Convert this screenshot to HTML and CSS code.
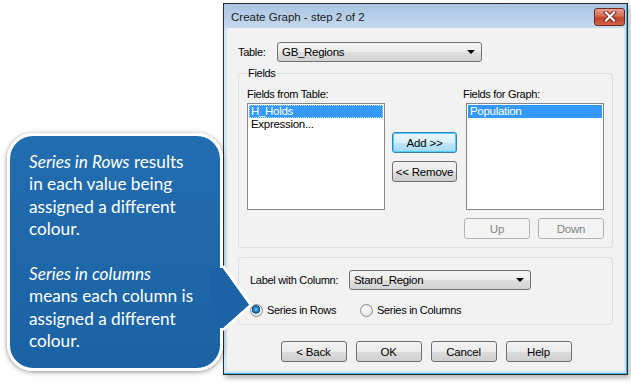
FILE: index.html
```html
<!DOCTYPE html>
<html lang="en">
<head>
    <meta charset="UTF-8">
    <title>Create Graph - step 2 of 2</title>
    <link rel="stylesheet" href="styles.css">
</head>
<body>

    <div class="stage">

        <!-- Callout bubble -->
        <div class="callout">
            <p><em>Series in Rows</em> results<br>in each value being<br>assigned a different<br>colour.</p>
            <p><em>Series in columns</em><br>means each column is<br>assigned a different<br>colour.</p>
            <svg class="callout-pointer" width="46" height="80" viewBox="0 0 46 80">
                <polygon points="0,10 13,10 41,47 13,70 0,70" fill="#1b63a6"/>
                <polyline points="13,8 41,47 13,72" fill="none" stroke="#ffffff" stroke-width="3" stroke-linejoin="miter"/>
            </svg>
        </div>

        <!-- Dialog window -->
        <div class="window">
            <div class="titlebar">
                <span class="title">Create Graph - step 2 of 2</span>
                <span class="close-btn">
                    <svg width="14" height="11" viewBox="0 0 14 11">
                        <path d="M3 1.5 L11 9.5 M11 1.5 L3 9.5" stroke="#6e2418" stroke-width="4" stroke-linecap="square"/>
                        <path d="M3 1.5 L11 9.5 M11 1.5 L3 9.5" stroke="#ffffff" stroke-width="2.2" stroke-linecap="square"/>
                    </svg>
                </span>
            </div>

            <div class="dialog">
                <div class="table-row">
                    <span class="row-label">Table:</span>
                    <div class="combo table-combo"><span>GB_Regions</span><i class="arrow"></i></div>
                </div>

                <fieldset class="group fields">
                    <legend>Fields</legend>
                    <div class="fields-body">
                        <div class="col">
                            <div class="caption">Fields from Table:</div>
                            <div class="listbox">
                                <div class="item selected focus">H_Holds</div>
                                <div class="item">Expression...</div>
                            </div>
                        </div>
                        <div class="mid">
                            <button class="btn default">Add &gt;&gt;</button>
                            <button class="btn">&lt;&lt; Remove</button>
                        </div>
                        <div class="col col-right">
                            <div class="caption">Fields for Graph:</div>
                            <div class="listbox">
                                <div class="item selected">Population</div>
                            </div>
                            <div class="order-row">
                                <button class="btn" disabled>Up</button>
                                <button class="btn" disabled>Down</button>
                            </div>
                        </div>
                    </div>
                </fieldset>

                <div class="group options">
                    <div class="label-row">
                        <span class="row-label label-col">Label with Column:</span>
                        <div class="combo label-combo"><span>Stand_Region</span><i class="arrow"></i></div>
                    </div>
                    <div class="radio-row">
                        <span class="radio-opt first"><i class="radio checked"></i>Series in Rows</span>
                        <span class="radio-opt"><i class="radio"></i>Series in Columns</span>
                    </div>
                </div>

                <div class="actions">
                    <button class="btn">&lt; Back</button>
                    <button class="btn">OK</button>
                    <button class="btn">Cancel</button>
                    <button class="btn">Help</button>
                </div>
            </div>
        </div>

    </div>

</body>
</html>
```

FILE: styles.css
```css
/* Page */
body {
    margin: 0;
    background: #ffffff;
    width: 631px;
    height: 383px;
    overflow: hidden;
}

.stage {
    display: flex;
    align-items: flex-start;
    padding: 3px 0 0 7px;
}

/* Callout bubble */
.callout {
    position: relative;
    z-index: 2;
    box-sizing: border-box;
    width: 216px;
    height: 238px;
    margin-top: 130px;
    padding: 15px 4px 0 19px;
    border: 3px solid #ffffff;
    border-radius: 26px;
    background: linear-gradient(to bottom, #226db0, #1a62a4);
    box-shadow: 0 1px 5px rgba(0, 0, 0, 0.45);
    font-family: Lato, "Open Sans", sans-serif;
    font-size: 17.2px;
    line-height: 22.4px;
    color: #ffffff;
    white-space: nowrap;
}

.callout p {
    margin: 0 0 22.4px 0;
}

.callout-pointer {
    position: absolute;
    left: 200px;
    top: 122px;
}

/* Window frame */
.window {
    box-sizing: border-box;
    width: 405px;
    height: 372px;
    border: 1px solid #2e2e2e;
    padding: 0 3px 3px;
    display: flex;
    flex-direction: column;
    background: linear-gradient(to bottom, #a9c4e2 0, #c6daf0 24px, #d6e5f5 25px, #d6e5f5 100%);
    box-shadow: inset -1px -1px 0 #39b6e8, 2px 3px 5px rgba(0, 0, 0, 0.3);
    font-family: "Liberation Sans", Arial, sans-serif;
    font-size: 11px;
    letter-spacing: -0.3px;
    color: #000;
}

.titlebar {
    height: 24px;
    display: flex;
    align-items: center;
    justify-content: space-between;
    padding: 0 0 0 4px;
}

.title {
    font-size: 11.5px;
    letter-spacing: 0;
    color: #1b1b1b;
    margin-top: 1px;
}

.close-btn {
    box-sizing: border-box;
    width: 31px;
    height: 18px;
    margin-right: -1px;
    margin-top: 1px;
    border: 1px solid #6c2a1f;
    border-radius: 3px;
    background: linear-gradient(to bottom, #e8a08e 0%, #d46a53 45%, #c2432b 55%, #d3624a 100%);
    display: flex;
    align-items: center;
    justify-content: center;
}

/* Dialog body */
.dialog {
    flex: 1;
    background: #f2f2f2;
    padding: 14px 11px 0 11px;
    display: flex;
    flex-direction: column;
}

.table-row,
.label-row {
    display: flex;
    align-items: center;
}

.row-label {
    width: 39px;
}

.label-col {
    width: 99px;
}

/* Combo box */
.combo {
    box-sizing: border-box;
    height: 20px;
    border: 1px solid #707070;
    border-radius: 3px;
    background: linear-gradient(to bottom, #f6f6f6 0%, #ececec 50%, #dfdfdf 51%, #d3d3d3 100%);
    display: flex;
    align-items: center;
    justify-content: space-between;
    padding: 0 6px 0 4px;
    font-size: 11.5px;
}

.table-combo {
    width: 205px;
}

.label-combo {
    width: 182px;
}

.arrow {
    width: 0;
    height: 0;
    border-left: 4px solid transparent;
    border-right: 4px solid transparent;
    border-top: 4px solid #000;
}

/* Group boxes */
.group {
    border: 1px solid #d5dfe5;
    border-radius: 3px;
    margin: 0;
}

.fields {
    margin-top: 4px;
    padding: 7px 8px 8px 8px;
    min-width: 0;
}

.fields legend {
    padding: 0 1px;
    line-height: 14px;
}

.fields-body {
    display: flex;
}

.caption {
    height: 14px;
    line-height: 14px;
    margin-bottom: 2px;
}

.col {
    width: 138px;
}

.col-right {
    width: 140px;
    margin-left: 7px;
}

.col-right .caption {
    margin-left: -1px;
}

.col-right .listbox {
    margin-left: 2px;
}

.listbox {
    box-sizing: border-box;
    width: 138px;
    height: 107px;
    border: 1px solid #828790;
    background: #ffffff;
    padding: 1px;
}

.item {
    height: 13px;
    line-height: 13px;
    padding-left: 2px;
    font-size: 11.5px;
}

.item.selected {
    background: #3399ff;
    color: #ffffff;
}

.item.focus {
    outline: 1px dotted #b8dcff;
    outline-offset: -1px;
}

.mid {
    width: 65px;
    margin-left: 7px;
    padding-top: 45px;
    display: flex;
    flex-direction: column;
    gap: 8px;
}

.mid .btn {
    width: 65px;
}

.order-row {
    display: flex;
    gap: 8px;
    margin-top: 8px;
}

/* Buttons */
.btn {
    box-sizing: border-box;
    width: 66px;
    height: 21px;
    padding: 0;
    border: 1px solid #707070;
    border-radius: 3px;
    background: linear-gradient(to bottom, #f2f2f2 0%, #ebebeb 50%, #dddddd 51%, #cfcfcf 100%);
    font-family: "Liberation Sans", Arial, sans-serif;
    font-size: 11.5px;
    letter-spacing: -0.2px;
    color: #000;
}

.btn.default {
    border-color: #3c7fb1;
    background: linear-gradient(to bottom, #eaf6fd 0%, #d9f0fc 50%, #bee6fd 51%, #a7d9f5 100%);
    box-shadow: inset 0 0 0 1px #48d1ff;
}

.btn:disabled {
    border-color: #adb2b5;
    background: #f4f4f4;
    color: #838383;
}

/* Options group */
.options {
    margin-top: 9px;
    padding: 12px 10px 7px 11px;
}

.radio-row {
    display: flex;
    align-items: center;
    margin-top: 13px;
    height: 14px;
}

.radio-opt {
    display: flex;
    align-items: center;
}

.radio-opt.first {
    width: 110px;
}

.radio {
    box-sizing: border-box;
    width: 13px;
    height: 13px;
    margin-right: 4px;
    border: 1px solid #8e8f8f;
    border-radius: 50%;
    background: radial-gradient(circle at 40% 40%, #ffffff 0%, #e6e6e6 60%, #d0d0d0 100%);
}

.radio.checked {
    background:
        radial-gradient(circle at 45% 40%, #7fd0f8 0, #2a8ad0 2px, #0d4a82 4px, transparent 4.5px),
        radial-gradient(circle, #ffffff 0%, #e4e4e4 70%, #cdcdcd 100%);
}

/* Bottom buttons */
.actions {
    display: flex;
    justify-content: center;
    gap: 9px;
    margin-top: 16px;
    padding-left: 1px;
}
```
